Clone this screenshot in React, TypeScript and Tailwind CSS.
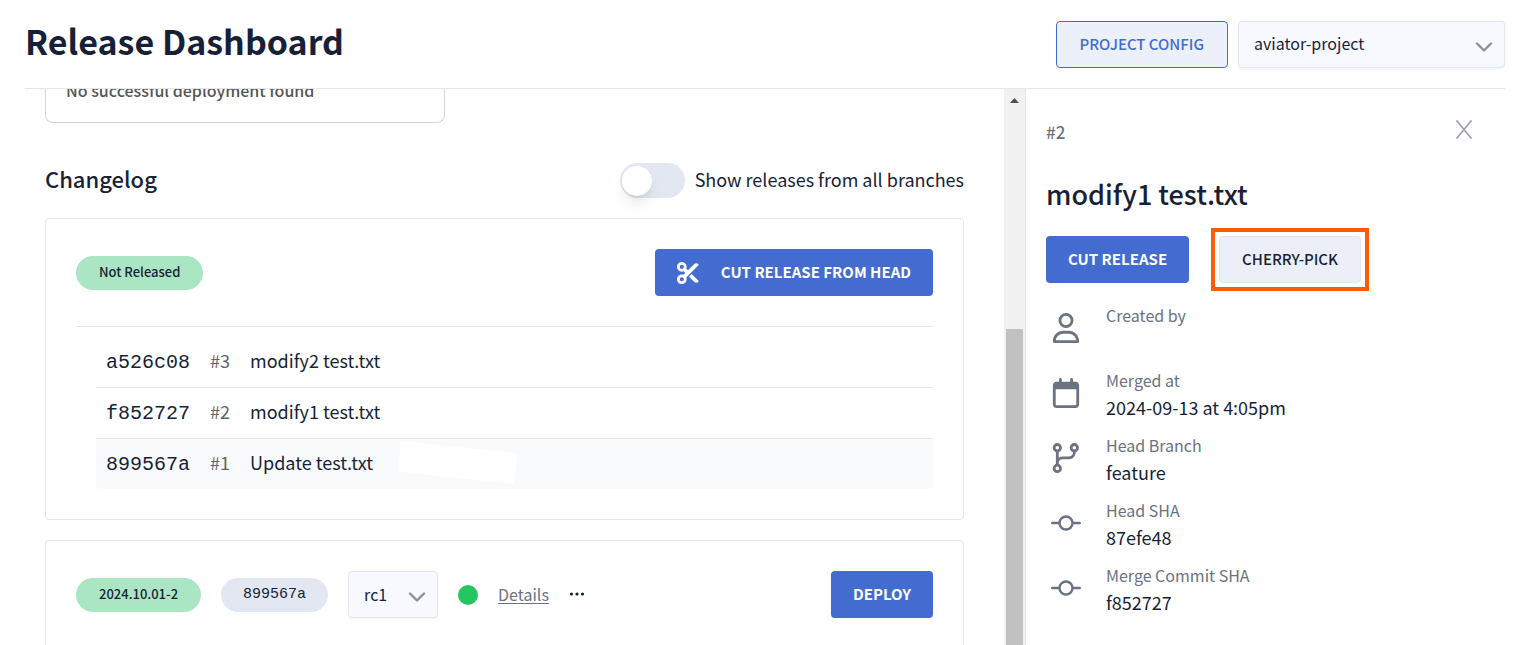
import type { ReactNode } from "react";
import { FaRegCalendar, FaRegUser, FaScissors } from "react-icons/fa6";

function Chevron({ className }: { className: string }) {
  return (
    <svg className={className} viewBox="0 0 18 10" fill="none" stroke="#8b8f9c" strokeWidth="2.4" strokeLinecap="round" strokeLinejoin="round" aria-hidden="true">
      <path d="M2 1.5 9 8.5 16 1.5" />
    </svg>
  );
}

function BranchIcon() {
  return (
    <svg className="size-[30px]" viewBox="0 0 30 30" fill="none" stroke="currentColor" strokeWidth="2.8" aria-hidden="true">
      <circle cx="6.3" cy="4.7" r="3.2" />
      <circle cx="23.3" cy="4.7" r="3.2" />
      <circle cx="6.3" cy="25.4" r="3.2" />
      <path d="M6.3 8V22M23.3 8v1.6a5.2 5.2 0 0 1-5.2 5.2h-6.6a5.2 5.2 0 0 0-5.2 4.4" />
    </svg>
  );
}

function CommitIcon() {
  return (
    <svg className="size-[30px]" viewBox="0 0 30 30" fill="none" stroke="currentColor" strokeWidth="2.4" strokeLinecap="round" aria-hidden="true">
      <circle cx="15" cy="15" r="6.5" />
      <path d="M1.2 15H8M22 15h6.8" />
    </svg>
  );
}

const commits = [
  { sha: "a526c08", id: "#3", title: "modify2 test.txt" },
  { sha: "f852727", id: "#2", title: "modify1 test.txt" },
  { sha: "899567a", id: "#1", title: "Update test.txt" },
];

const details: { label: string; value: string; icon: ReactNode }[] = [
  { label: "Created by", value: "", icon: <FaRegUser className="size-[30px]" /> },
  { label: "Merged at", value: "2024-09-13 at 4:05pm", icon: <FaRegCalendar className="size-[30px]" /> },
  { label: "Head Branch", value: "feature", icon: <BranchIcon /> },
  { label: "Head SHA", value: "87efe48", icon: <CommitIcon /> },
  { label: "Merge Commit SHA", value: "f852727", icon: <CommitIcon /> },
];

export default function App() {
  return (
    <div className="flex h-screen flex-col overflow-hidden bg-white pr-4 pl-[25px] font-['Noto_Sans_CJK_SC',sans-serif] text-[#181f38]">
      <header className="flex h-[89px] shrink-0 items-center justify-between border-b border-[#e5e6e9]">
        <h1 className="pb-1.5 text-[34px] leading-[48px] font-bold">Release Dashboard</h1>
        <div className="flex gap-2.5">
          <button className="h-[47px] rounded border border-[#446bd0] bg-[#ecf0fb] px-[23px] text-[15px] font-medium text-[#446bd0]">PROJECT CONFIG</button>
          <div className="relative">
            <select aria-label="Project" className="h-[47px] w-[267px] appearance-none rounded border border-[#e3e6f1] bg-[#f8f9fe] px-[15px] pb-0.5 text-[16px] shadow-xs">
              <option>aviator-project</option>
            </select>
            <Chevron className="pointer-events-none absolute top-[21px] right-3 w-[18px]" />
          </div>
        </div>
      </header>

      <div className="flex min-h-0 flex-1">
        <main className="min-w-0 flex-1 overflow-hidden pr-10 pl-5">
          <div className="flex h-[34px] w-[400px] items-end rounded-b-lg border border-t-0 border-[#d3d4db] px-5 pb-5 text-[16px] font-medium text-[#555]">
            <p className="leading-6">No successful deployment found</p>
          </div>

          <div className="mt-10 flex h-[35px] items-center justify-between">
            <h2 className="pb-1.5 text-[22px] leading-8 font-medium">Changelog</h2>
            <label className="flex items-center gap-2.5 text-[18px]">
              <input type="checkbox" role="switch" className="peer sr-only" />
              <span className="flex h-[35px] w-[65px] items-center rounded-full bg-[#e3e7f2] px-0.5">
                <span className="size-[30px] rounded-full bg-white shadow-lg" />
              </span>
              <span className="pb-0.5">Show releases from all branches</span>
            </label>
          </div>

          <section className="mt-5 rounded border border-[#e5e6e9] p-[30px]">
            <div className="flex items-center justify-between">
              <span className="rounded-full bg-[#abe6c4] px-[23px] pb-0.5 text-[13px] leading-8 font-medium">Not Released</span>
              <button className="flex h-[47px] items-center gap-[22px] rounded bg-[#446bd0] px-[22px] text-[15px] font-bold text-white">
                <FaScissors className="size-[22px]" />
                CUT RELEASE FROM HEAD
              </button>
            </div>
            <ul className="mt-[30px] border-t border-[#e5e6e9] pt-2.5 pl-5">
              {commits.map((c) => (
                <li key={c.sha} className="flex h-[51px] items-baseline border-b border-[#e5e6e9] px-2.5 text-[18px] leading-[47px] last:h-[50px] last:rounded last:border-b-0 last:bg-[#f9fafc]">
                  <span className="w-[104px] font-['Liberation_Mono',monospace] text-[20px]">{c.sha}</span>
                  <span className="w-10 text-[#5d6472]">{c.id}</span>
                  <span>{c.title}</span>
                  {c.id === "#1" && <span className="mb-1 ml-[26px] h-[31px] w-[117px] rotate-6 self-center bg-white" />}
                </li>
              ))}
            </ul>
          </section>

          <section className="mt-5 rounded border border-[#e5e6e9] p-[30px]">
            <div className="flex items-center">
              <span className="rounded-full bg-[#abe6c4] px-[23px] pb-0.5 text-[13px] leading-8 font-medium">2024.10.01-2</span>
              <span className="ml-5 rounded-full bg-[#e3e7f2] px-[22px] font-['Liberation_Mono',monospace] text-[15px] leading-[34px]">899567a</span>
              <div className="relative ml-5">
                <select aria-label="Release candidate" className="h-[47px] w-[90px] appearance-none rounded border border-[#e3e6f1] bg-[#f8f9fe] px-[15px] pb-0.5 text-[16px] shadow-xs">
                  <option>rc1</option>
                </select>
                <Chevron className="pointer-events-none absolute top-[21px] right-3 w-[18px]" />
              </div>
              <span className="ml-5 size-5 rounded-full bg-[#25c560]" />
              <a href="#details" className="ml-5 pb-0.5 text-[16px] text-[#6b7280] underline underline-offset-2">Details</a>
              <button aria-label="More actions" className="ml-5 pb-0.5">
                <svg className="h-4 w-4" viewBox="0 0 16 16" fill="currentColor" aria-hidden="true">
                  <circle cx="2.5" cy="8" r="1.6" />
                  <circle cx="8" cy="8" r="1.6" />
                  <circle cx="13.5" cy="8" r="1.6" />
                </svg>
              </button>
              <button className="ml-auto h-[47px] rounded bg-[#446bd0] px-[22px] text-[15px] font-bold text-white">DEPLOY</button>
            </div>
          </section>
        </main>

        <div className="flex w-[21px] shrink-0 flex-col items-center bg-[#f1f1f1]" aria-hidden="true">
          <svg className="mt-[9px] h-[5px] w-[9px] shrink-0" viewBox="0 0 9 5" fill="#505050">
            <path d="M4.5 0 9 5H0z" />
          </svg>
          <div className="mt-[226px] w-[17px] flex-1 bg-[#c1c1c1]" />
        </div>

        <aside className="w-[480px] shrink-0 border-l border-[#e5e6e9] pt-7 pr-[30px] pl-5">
          <div className="flex items-start justify-between">
            <span className="text-[17px] leading-[30px] font-medium text-[#6b7280]">#2</span>
            <button aria-label="Close" className="pt-[3px]">
              <svg className="h-[19px] w-[21px]" viewBox="0 0 21 19" fill="none" stroke="#9ca3af" strokeWidth="1.8" strokeLinecap="round" aria-hidden="true">
                <path d="M3 1 17 18M17 1 3 18" />
              </svg>
            </button>
          </div>
          <h2 className="mt-[27px] text-[27px] leading-10 font-medium">modify1 test.txt</h2>
          <div className="mt-[22px] flex gap-[30px]">
            <button className="h-[47px] rounded bg-[#446bd0] px-[22px] text-[15px] font-bold text-white">CUT RELEASE</button>
            <div className="-m-2 border-4 border-[#ff5b00] p-1">
              <button className="h-[47px] rounded border border-[#e3e6ec] bg-[#eceff8] px-[22px] text-[15px] font-medium">CHERRY-PICK</button>
            </div>
          </div>
          <dl className="mt-3">
            {details.map((d) => (
              <div key={d.label} className="flex h-[65px] items-center gap-[25px] px-[5px]">
                <span className="text-[#6b7280]">{d.icon}</span>
                <div className="h-[52px] leading-[27px]">
                  <dt className="text-[16px] text-[#6b7280]">{d.label}</dt>
                  <dd className="text-[18px]">{d.value}</dd>
                </div>
              </div>
            ))}
          </dl>
        </aside>
      </div>
    </div>
  );
}
